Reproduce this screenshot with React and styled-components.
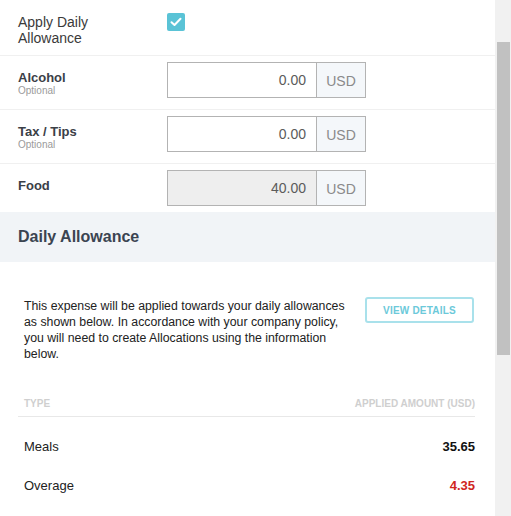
import React from "react";
import styled, { createGlobalStyle } from "styled-components";

const Global = createGlobalStyle`
  html, body { margin: 0; padding: 0; background: #fff; }
  body { font-family: "Liberation Sans", Arial, sans-serif; }
  * { box-sizing: border-box; }
`;

const Frame = styled.div`
  display: flex;
  width: 511px;
  height: 516px;
  overflow: hidden;
`;

const Main = styled.div`
  width: 495px;
  display: flex;
  flex-direction: column;
`;

const ScrollTrack = styled.div`
  width: 16px;
  background: #f1f1f1;
  padding: 42px 1px 0 2px;
`;

const ScrollThumb = styled.div`
  height: 313px;
  background: #c1c1c1;
`;

const FieldRow = styled.div`
  display: flex;
  align-items: flex-start;
  padding: ${(p) => p.$pad || "6px 0 11px 18px"};
  border-bottom: ${(p) => (p.$last ? "none" : "1px solid #f0f0f0")};
`;

const LabelCol = styled.div`
  width: 149px;
  flex-shrink: 0;
  padding-top: ${(p) => p.$top || "8px"};
`;

const PlainLabel = styled.div`
  font-size: 14px;
  line-height: 16px;
  color: #3a3a3a;
`;

const BoldLabel = styled.div`
  font-size: 13px;
  line-height: 15px;
  font-weight: bold;
  color: #3b4047;
`;

const Hint = styled.div`
  font-size: 10px;
  line-height: 12px;
  color: #9a9a9a;
`;

const Check = styled.div`
  width: 18px;
  height: 18px;
  margin-top: 7px;
  border-radius: 2px;
  background: #5ac3d6;
  display: flex;
  align-items: center;
  justify-content: center;
`;

const InputGroup = styled.div`
  display: flex;
  height: 36px;
`;

const ValueBox = styled.div`
  width: 149px;
  border: 1px solid #b3b3b3;
  border-right: none;
  background: ${(p) => (p.$disabled ? "#eeeeee" : "#fff")};
  display: flex;
  align-items: center;
  justify-content: flex-end;
  padding-right: 10px;
  font-size: 14px;
  color: #5b5b5b;
`;

const Addon = styled.div`
  width: 50px;
  border: 1px solid #b3b3b3;
  background: #f4f7fa;
  display: flex;
  align-items: center;
  justify-content: center;
  font-size: 14px;
  color: #8a8a8a;
  padding-top: 2px;
`;

const SectionHeader = styled.div`
  height: 50px;
  background: #f1f4f7;
  display: flex;
  align-items: center;
  padding-left: 18px;
  font-size: 16px;
  font-weight: bold;
  color: #3b4451;
`;

const Intro = styled.div`
  display: flex;
  align-items: flex-start;
  gap: 12px;
  padding: 35px 21px 0 24px;
`;

const Paragraph = styled.p`
  margin: 0;
  max-width: 326px;
  flex: 1;
  font-size: 12.3px;
  line-height: 16px;
  color: #222;
  padding-top: 1px;
`;

const OutlineButton = styled.button`
  width: 109px;
  height: 26px;
  flex-shrink: 0;
  margin-left: auto;
  background: #fff;
  border: 2px solid #a9e1eb;
  border-radius: 3px;
  font-family: "Liberation Sans", Arial, sans-serif;
  font-size: 10px;
  font-weight: bold;
  color: #6cc9da;
  letter-spacing: 0.2px;
  padding: 0;
`;

const Table = styled.div`
  margin: 36px 20px 0 18px;
`;

const HeadRow = styled.div`
  display: flex;
  justify-content: space-between;
  padding: 0 0 6px 6px;
  border-bottom: 1px solid #e8e8e8;
  font-size: 10px;
  line-height: 12px;
  font-weight: bold;
  color: #cfcfcf;
`;

const Body = styled.div`
  padding-top: 10px;
`;

const DataRow = styled.div`
  display: flex;
  justify-content: space-between;
  align-items: center;
  height: 39px;
  padding-left: 6px;
  font-size: 13px;
`;

const TypeCell = styled.span`
  color: #222;
`;

const Amount = styled.span`
  font-weight: bold;
  color: ${(p) => (p.$over ? "#d0261e" : "#111")};
`;

export default function App() {
  return (
    <>
      <Global />
      <Frame>
        <Main>
          <FieldRow $pad="6px 0 9px 18px">
            <LabelCol $top="8px">
              <PlainLabel>Apply Daily</PlainLabel>
              <PlainLabel>Allowance</PlainLabel>
            </LabelCol>
            <Check>
              <svg width="12" height="10" viewBox="0 0 12 10">
                <path d="M1.5 5.2 L4.5 8 L10.5 1.8" fill="none" stroke="#fff" strokeWidth="2" strokeLinecap="round" strokeLinejoin="round" />
              </svg>
            </Check>
          </FieldRow>
          <FieldRow>
            <LabelCol>
              <BoldLabel>Alcohol</BoldLabel>
              <Hint>Optional</Hint>
            </LabelCol>
            <InputGroup>
              <ValueBox>0.00</ValueBox>
              <Addon>USD</Addon>
            </InputGroup>
          </FieldRow>
          <FieldRow>
            <LabelCol>
              <BoldLabel>Tax / Tips</BoldLabel>
              <Hint>Optional</Hint>
            </LabelCol>
            <InputGroup>
              <ValueBox>0.00</ValueBox>
              <Addon>USD</Addon>
            </InputGroup>
          </FieldRow>
          <FieldRow $pad="6px 0 6px 18px" $last>
            <LabelCol>
              <BoldLabel>Food</BoldLabel>
            </LabelCol>
            <InputGroup>
              <ValueBox $disabled>40.00</ValueBox>
              <Addon>USD</Addon>
            </InputGroup>
          </FieldRow>
          <SectionHeader>Daily Allowance</SectionHeader>
          <Intro>
            <Paragraph>
              This expense will be applied towards your daily allowances as shown below. In accordance with your company policy, you will need to create Allocations using the information below.
            </Paragraph>
            <OutlineButton>VIEW DETAILS</OutlineButton>
          </Intro>
          <Table>
            <HeadRow>
              <span>TYPE</span>
              <span>APPLIED AMOUNT (USD)</span>
            </HeadRow>
            <Body>
              <DataRow>
                <TypeCell>Meals</TypeCell>
                <Amount>35.65</Amount>
              </DataRow>
              <DataRow>
                <TypeCell>Overage</TypeCell>
                <Amount $over>4.35</Amount>
              </DataRow>
            </Body>
          </Table>
        </Main>
        <ScrollTrack>
          <ScrollThumb />
        </ScrollTrack>
      </Frame>
    </>
  );
}
